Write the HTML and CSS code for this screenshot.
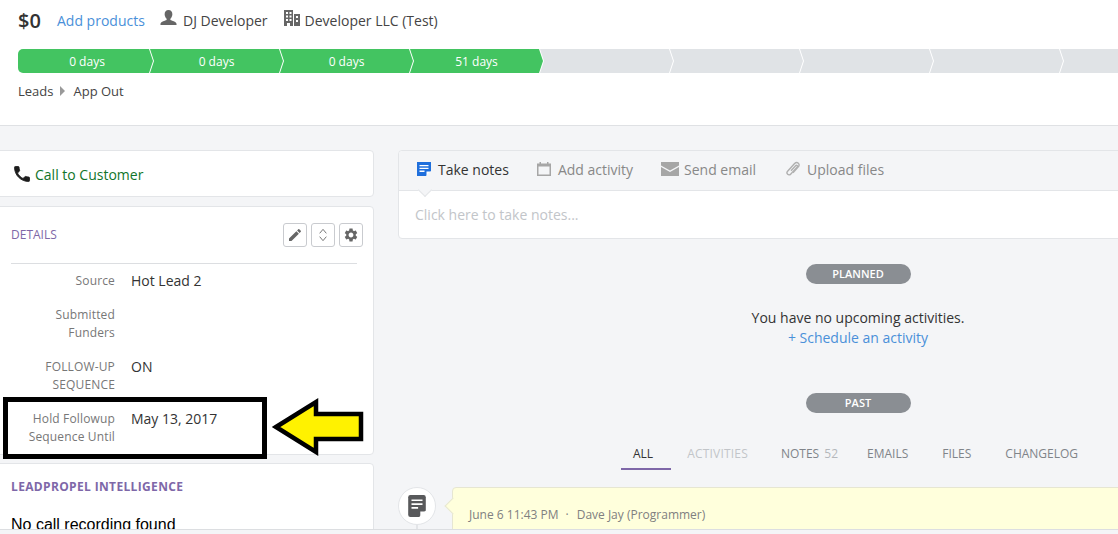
FILE: index.html
```html
<!DOCTYPE html>
<html lang="en">
<head>
    <meta charset="UTF-8">
    <title>Deal details</title>
    <link rel="stylesheet" href="styles.css">
</head>
<body>
    <header class="deal-header">
        <div class="deal-summary">
            <span class="deal-value">$0</span>
            <a class="link add-products">Add products</a>
            <span class="deal-meta">
                <svg class="icon-person" viewBox="0 0 18 18"><path d="M9 0c2.700 0 4.100 2 4.100 4.500 0 2-1 3.800-2.100 4.700v1.500c1.500.7 6 1.700 6.500 3.800v1.500H.5v-1.500c.5-2.100 5-3.100 6.500-3.800V9.200C5.900 8.300 4.900 6.500 4.900 4.500 4.900 2 6.300 0 9 0z"/></svg>
                DJ Developer
            </span>
            <span class="deal-meta">
                <svg class="icon-building" viewBox="0 0 16 16"><path fill-rule="evenodd" d="M0 0h9v16H6v-3H3v3H0zM10 4h6v12h-6zM2 2v2h2V2zM5.500 2v2h2V2zM2 5.500v2h2v-2zM5.500 5.500v2h2v-2zM2 9v2h2V9zM5.500 9v2h2V9zM12 6v2h2V6zM12 10v2h2v-2z"/></svg>
                Developer LLC (Test)
            </span>
        </div>

        <div class="pipeline">
            <div class="stage done first">0 days</div>
            <div class="stage done">0 days</div>
            <div class="stage done">0 days</div>
            <div class="stage done">51 days</div>
            <div class="stage"></div>
            <div class="stage"></div>
            <div class="stage"></div>
            <div class="stage"></div>
            <div class="stage"></div>
        </div>

        <div class="crumbs">
            <span>Leads</span>
            <span class="crumb-arrow"></span>
            <span>App Out</span>
        </div>
    </header>

    <main class="columns">
        <div class="left-col">
            <section class="card call-card">
                <svg class="icon-phone" viewBox="0 0 24 24"><path d="M6.600 10.800c1.400 2.800 3.800 5.100 6.600 6.600l2.200-2.200c.3-.3.7-.4 1-.2 1.100.4 2.300.6 3.600.6.600 0 1 .4 1 1V20c0 .6-.4 1-1 1C10.600 21 3 13.400 3 4c0-.6.4-1 1-1h3.500c.6 0 1 .4 1 1 0 1.300.2 2.500.6 3.600.1.300 0 .7-.2 1z"/></svg>
                <a class="call-link">Call to Customer</a>
            </section>

            <section class="card details-card">
                <div class="details-head">
                    <h2 class="card-title">DETAILS</h2>
                    <div class="tool-buttons">
                        <button class="tool">
                            <svg viewBox="0 0 24 24"><path d="M3 17.250V21h3.750L17.810 9.940l-3.750-3.750L3 17.250zM20.710 7.040c.39-.39.39-1.020 0-1.410l-2.340-2.340c-.39-.39-1.020-.39-1.410 0l-1.830 1.830 3.750 3.750 1.830-1.830z"/></svg>
                        </button>
                        <button class="tool">
                            <svg class="stroke-icon" viewBox="0 0 24 24"><path d="M7 9.500l5-6 5 6M7 14.500l5 6 5-6"/></svg>
                        </button>
                        <button class="tool">
                            <svg viewBox="0 0 24 24"><path d="M19.140 12.940c.04-.3.06-.61.06-.94 0-.32-.02-.64-.07-.94l2.030-1.580c.18-.14.23-.41.12-.61l-1.920-3.320c-.12-.22-.37-.29-.59-.22l-2.390.96c-.5-.38-1.030-.7-1.620-.94l-.36-2.540c-.04-.24-.24-.41-.48-.41h-3.840c-.24 0-.43.17-.47.41l-.36 2.540c-.59.24-1.130.57-1.620.94l-2.390-.96c-.22-.08-.47 0-.59.22L2.740 8.870c-.12.21-.08.47.12.61l2.030 1.580c-.05.3-.09.63-.09.94s.02.64.07.94l-2.030 1.580c-.18.14-.23.41-.12.61l1.920 3.320c.12.22.37.29.59.22l2.390-.96c.5.38 1.030.7 1.620.94l.36 2.540c.05.24.24.41.48.41h3.840c.24 0 .44-.17.47-.41l.36-2.540c.59-.24 1.130-.56 1.620-.94l2.390.96c.22.08.47 0 .59-.22l1.920-3.320c.12-.22.07-.47-.12-.61l-2.010-1.580zM12 15.600c-1.980 0-3.600-1.620-3.600-3.600s1.620-3.600 3.600-3.600 3.600 1.620 3.600 3.600-1.620 3.600-3.600 3.600z"/></svg>
                        </button>
                    </div>
                </div>
                <div class="field">
                    <div class="field-label">Source</div>
                    <div class="field-value">Hot Lead 2</div>
                </div>
                <div class="field">
                    <div class="field-label">Submitted<br>Funders</div>
                    <div class="field-value"></div>
                </div>
                <div class="field">
                    <div class="field-label">FOLLOW-UP<br>SEQUENCE</div>
                    <div class="field-value">ON</div>
                </div>
                <div class="field">
                    <div class="field-label">Hold Followup<br>Sequence Until</div>
                    <div class="field-value">May 13, 2017</div>
                </div>
            </section>

            <section class="card intel-card">
                <h2 class="card-title bold">LEADPROPEL INTELLIGENCE</h2>
                <p class="no-recording">No call recording found</p>
            </section>
        </div>

        <div class="right-col">
            <section class="card notes-card">
                <div class="composer-tabs">
                    <span class="composer-tab active">
                        <svg class="icon-14" viewBox="0 0 14 14"><path fill="#1f6fdc" d="M0 0h14v9l-5 5H0z"/><path fill="#fff" d="M2.500 3h9v1.300h-9zM2.500 5.800h9v1.300h-9zM2.500 8.600h5v1.300h-5zM9.500 14V9.500H14z"/></svg>
                        Take notes
                    </span>
                    <span class="composer-tab">
                        <svg class="icon-14" viewBox="0 0 14 14"><path fill-rule="evenodd" fill="#a6a6a6" d="M0 1.500h2.500V0h1.500v1.500h6V0h1.500v1.500H14V14H0zM1.500 4.500v8h11v-8z"/></svg>
                        Add activity
                    </span>
                    <span class="composer-tab mail-tab">
                        <svg class="icon-mail" viewBox="0 0 18 14"><path fill="#a6a6a6" d="M0 0h18v3.500l-9 5-9-5zM0 5l9 5 9-5v9H0z"/></svg>
                        Send email
                    </span>
                    <span class="composer-tab clip-tab">
                        <svg class="icon-clip" viewBox="0 0 16 16"><path fill="none" stroke="#b0b0b0" stroke-width="1.400" d="M6 9.700l4.600-5c1-1.100 2.500.3 1.500 1.400L5.600 13.200c-1.900 2-4.900-.8-3-2.900l7-7.700c2.600-2.700 6.100.6 3.700 3.200L8 11.700"/></svg>
                        Upload files
                    </span>
                </div>
                <div class="note-input">Click here to take notes...</div>
            </section>

            <div class="timeline-block">
                <div class="pill">PLANNED</div>
                <p class="no-activity">You have no upcoming activities.</p>
                <a class="link schedule">+ Schedule an activity</a>
                <div class="pill past">PAST</div>
            </div>

            <nav class="filter-tabs">
                <a class="filter active">ALL</a>
                <a class="filter muted">ACTIVITIES</a>
                <a class="filter notes">NOTES <span class="count">52</span></a>
                <a class="filter">EMAILS</a>
                <a class="filter">FILES</a>
                <a class="filter">CHANGELOG</a>
            </nav>

            <div class="feed-item">
                <div class="feed-icon">
                    <svg viewBox="0 0 16 20"><path fill="#58595b" d="M2 0h12a2 2 0 0 1 2 2v12l-6 6H2a2 2 0 0 1-2-2V2a2 2 0 0 1 2-2z"/><path fill="#fff" d="M3 4h10v1.500H3zM3 7.500h10V9H3zM3 11h6v1.500H3zM11 20v-5h5z"/></svg>
                </div>
                <div class="feed-note">June 6 11:43 PM<span class="dot">&middot;</span>Dave Jay (Programmer)</div>
            </div>
        </div>
    </main>

    <div class="bottom-bar"></div>

    <!-- annotation drawn on top of the screenshot -->
    <div class="mark-box"></div>
    <svg class="mark-arrow" viewBox="0 0 100 64"><path fill="#fff200" stroke="#000" stroke-width="4.500" d="M8 31L48 6v12h45v25H48v13z"/></svg>
</body>
</html>
```

FILE: styles.css
```css
* {
    box-sizing: border-box;
}

html, body {
    height: 100%;
}

body {
    margin: 0;
    position: relative;
    overflow: hidden;
    background: #f4f5f7;
    color: #333;
    font-family: "Open Sans", Arial, sans-serif;
    font-size: 14px;
}

.link {
    color: #4a90d9;
}

/* top part */
.deal-header {
    height: 126px;
    padding: 8px 0 0 18px;
    background: #fff;
    border-bottom: 1px solid #dfe1e4;
}

.deal-summary {
    display: flex;
    align-items: center;
    height: 24px;
}

.deal-value {
    font-size: 20px;
    font-weight: 600;
    width: 39px;
}

.add-products {
    width: 103px;
}

.deal-meta {
    display: flex;
    align-items: center;
    gap: 6px;
    margin-right: 16px;
    color: #444;
}

.icon-person {
    width: 17px;
    height: 17px;
    margin-top: -4px;
    fill: #666;
}

.icon-building {
    width: 16px;
    height: 16px;
    margin-top: -4px;
    margin-right: -1px;
    fill: #666;
}

.pipeline {
    display: flex;
    margin-top: 17px;
    margin-right: -200px;
}

.stage {
    flex: none;
    width: 133px;
    height: 24px;
    margin-left: -3px;
    padding-top: 1px;
    background: #e0e3e6;
    color: #fff;
    font-size: 12px;
    line-height: 24px;
    text-align: center;
    clip-path: polygon(0 0, calc(100% - 4px) 0, 100% 50%, calc(100% - 4px) 100%, 0 100%, 4px 50%);
}

.stage.done {
    background: #43c461;
}

.stage.first {
    width: 135px;
    margin-left: 0;
    padding-left: 3px;
    border-radius: 5px 0 0 5px;
    clip-path: polygon(0 0, calc(100% - 4px) 0, 100% 50%, calc(100% - 4px) 100%, 0 100%);
}

.crumbs {
    display: flex;
    align-items: center;
    margin-top: 9px;
    font-size: 13px;
    line-height: 18px;
    color: #444;
}

.crumb-arrow {
    width: 0;
    height: 0;
    margin: 0 8px 0 7px;
    border-left: 5px solid #999;
    border-top: 5px solid transparent;
    border-bottom: 5px solid transparent;
}

/* columns */
.columns {
    display: flex;
    padding-top: 24px;
}

.left-col {
    flex: none;
    width: 378px;
    margin-left: -4px;
}

.right-col {
    flex: none;
    width: 920px;
    margin-left: 24px;
}

.card {
    background: #fff;
    border: 1px solid #e3e5e8;
    border-radius: 4px;
}

.call-card {
    display: flex;
    align-items: center;
    height: 47px;
    padding: 1px 0 0 15px;
    margin-bottom: 9px;
}

.icon-phone {
    width: 20px;
    height: 20px;
    margin-right: 3px;
    fill: #1c1c1c;
    stroke: #1c1c1c;
    stroke-width: 1;
}

.call-link {
    color: #11752a;
}

.details-card {
    height: 249px;
    padding: 16px 16px 0 14px;
    margin-bottom: 8px;
}

.details-head {
    display: flex;
    justify-content: space-between;
    align-items: center;
    height: 41px;
    width: 346px;
    padding-bottom: 17px;
    margin-bottom: 8px;
    border-bottom: 1px solid #dcdee1;
}

.card-title {
    margin: 0;
    color: #7e67a8;
    font-size: 12px;
    font-weight: 500;
}

.card-title.bold {
    font-weight: 700;
    letter-spacing: .35px;
}

.tool-buttons {
    display: flex;
    gap: 4px;
    margin-right: -6px;
}

.tool {
    display: flex;
    align-items: center;
    justify-content: center;
    width: 24px;
    height: 24px;
    padding: 0;
    background: #fff;
    border: 1px solid #c9cbcf;
    border-radius: 3px;
}

.tool svg {
    width: 16px;
    height: 16px;
    fill: #666;
}

.tool .stroke-icon {
    fill: none;
    stroke: #777;
    stroke-width: 1.500;
}

.field {
    display: flex;
    gap: 16px;
    margin-bottom: 16px;
}

.field-label {
    width: 104px;
    color: #777;
    font-size: 12px;
    letter-spacing: .15px;
    line-height: 18px;
    text-align: right;
}

.field-value {
    line-height: 18px;
    color: #333;
}

.intel-card {
    height: 120px;
    padding: 14px;
}

.no-recording {
    margin: 21px 0 0;
    color: #000;
    font-family: "Liberation Sans", Arial, sans-serif;
    font-size: 16px;
}

/* notes box */
.notes-card {
    height: 89px;
}

.composer-tabs {
    display: flex;
    height: 40px;
    padding: 0 0 3px 18px;
    gap: 28px;
    background: #f4f5f7;
    border-bottom: 1px solid #e3e5e8;
    border-radius: 4px 4px 0 0;
}

.composer-tab {
    position: relative;
    display: flex;
    align-items: center;
    gap: 7px;
    color: #888;
}

.composer-tab.active {
    color: #333;
}

.composer-tab.active::after {
    content: "";
    position: absolute;
    left: 3px;
    bottom: -8px;
    width: 9px;
    height: 9px;
    background: #f4f5f7;
    border-right: 1px solid #e3e5e8;
    border-bottom: 1px solid #e3e5e8;
    transform: rotate(45deg);
}

.icon-14 {
    width: 14px;
    height: 14px;
}

.icon-mail {
    width: 18px;
    height: 14px;
}

.mail-tab {
    gap: 5px;
}

.icon-clip {
    width: 16px;
    height: 16px;
}

.clip-tab {
    margin-left: 1px;
    gap: 6px;
}

.note-input {
    padding: 14px 16px;
    line-height: 19px;
    color: #c2c5c9;
}

/* planned / past */
.timeline-block {
    display: flex;
    flex-direction: column;
    align-items: center;
    padding-top: 25px;
}

.pill {
    width: 105px;
    height: 20px;
    background: #8a8e93;
    border-radius: 10px;
    color: #fff;
    font-size: 11px;
    font-weight: 600;
    line-height: 20px;
    text-align: center;
}

.pill.past {
    margin-top: 45px;
}

.no-activity {
    margin: 24px 0 0;
    line-height: 20px;
    color: #333;
}

.schedule {
    line-height: 20px;
}

.filter-tabs {
    display: flex;
    margin-top: 29px;
    padding-left: 223px;
    height: 28px;
}

.filter {
    padding: 0 17px;
    color: #808489;
    font-size: 12px;
    line-height: 24px;
    height: 28px;
}

.filter.active {
    padding: 0 18px 0 12px;
    margin-right: -1px;
    color: #333;
    border-bottom: 2px solid #7e67a8;
}

.filter.muted {
    padding-right: 16px;
    color: #c2c5c9;
    letter-spacing: .2px;
}

.filter.notes {
    padding-right: 12px;
}

.count {
    margin-left: 2px;
    color: #b5b8bc;
}

.feed-item {
    display: flex;
    margin-top: 17px;
}

.feed-icon {
    flex: none;
    display: flex;
    align-items: center;
    justify-content: center;
    position: relative;
    width: 38px;
    height: 38px;
    margin-right: 16px;
    background: #fff;
    border: 1px solid #e3e5e8;
    border-radius: 50%;
}

.feed-icon svg {
    width: 18px;
    height: 22px;
}

.feed-icon::after {
    content: "";
    position: absolute;
    left: 17px;
    top: 37px;
    width: 2px;
    height: 8px;
    background: #e3e5e8;
}

.feed-note {
    position: relative;
    flex: 1;
    height: 60px;
    padding: 17px 16px;
    background: #ffffdc;
    border: 1px solid #e6e6d2;
    border-radius: 4px 0 0 0;
    color: #808080;
    font-size: 12px;
    line-height: 20px;
}

.feed-note::before {
    content: "";
    position: absolute;
    left: -6px;
    top: 12px;
    width: 11px;
    height: 11px;
    background: #ffffdc;
    border-left: 1px solid #e6e6d2;
    border-bottom: 1px solid #e6e6d2;
    transform: rotate(45deg);
}

.dot {
    margin: 0 8px 0 7px;
}

.bottom-bar {
    position: absolute;
    left: 0;
    right: 0;
    bottom: 0;
    height: 5px;
    background: #f4f5f7;
    border-top: 1px solid #dcdee1;
}

/* black box and yellow arrow */
.mark-box {
    position: absolute;
    left: 3px;
    top: 397px;
    width: 264px;
    height: 62px;
    border: 5px solid #000;
}

.mark-arrow {
    position: absolute;
    left: 268px;
    top: 396px;
    width: 100px;
    height: 64px;
}
```
